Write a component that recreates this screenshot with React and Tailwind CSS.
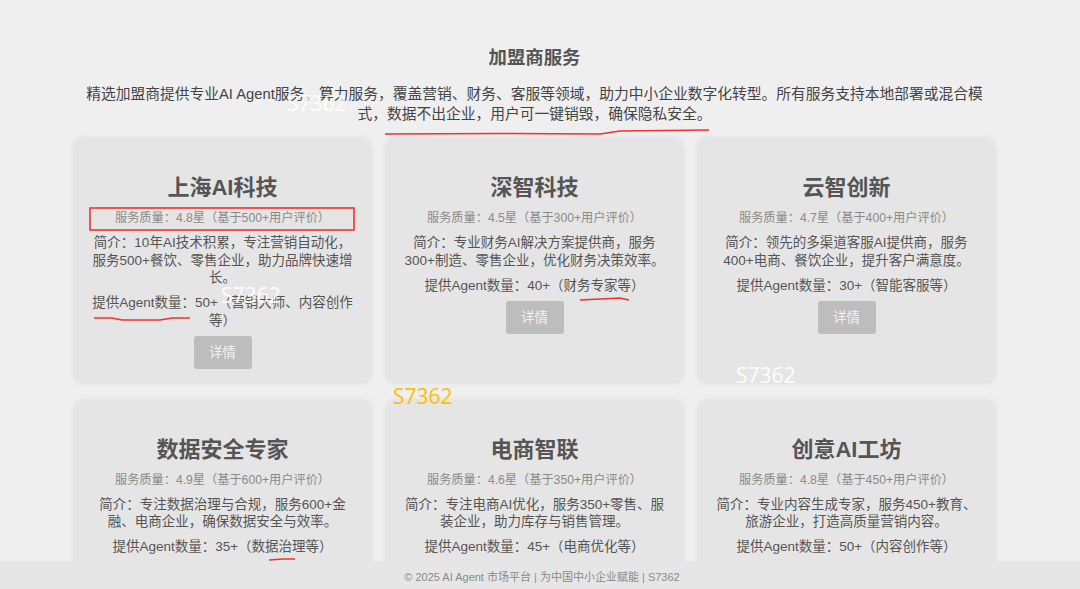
const font = { fontFamily: '"Liberation Sans", "Noto Sans CJK SC", sans-serif' };
const markFont = { fontFamily: '"Open Sans", sans-serif' };

const cards = [
  { name: '上海AI科技', q: '服务质量：4.8星（基于500+用户评价）', d: '简介：10年AI技术积累，专注营销自动化，服务500+餐饮、零售企业，助力品牌快速增长。', a: '提供Agent数量：50+（营销大师、内容创作等）' },
  { name: '深智科技', q: '服务质量：4.5星（基于300+用户评价）', d: '简介：专业财务AI解决方案提供商，服务300+制造、零售企业，优化财务决策效率。', a: '提供Agent数量：40+（财务专家等）' },
  { name: '云智创新', q: '服务质量：4.7星（基于400+用户评价）', d: '简介：领先的多渠道客服AI提供商，服务400+电商、餐饮企业，提升客户满意度。', a: '提供Agent数量：30+（智能客服等）' },
  { name: '数据安全专家', q: '服务质量：4.9星（基于600+用户评价）', d: '简介：专注数据治理与合规，服务600+金融、电商企业，确保数据安全与效率。', a: '提供Agent数量：35+（数据治理等）' },
  { name: '电商智联', q: '服务质量：4.6星（基于350+用户评价）', d: '简介：专注电商AI优化，服务350+零售、服装企业，助力库存与销售管理。', a: '提供Agent数量：45+（电商优化等）' },
  { name: '创意AI工坊', q: '服务质量：4.8星（基于450+用户评价）', d: '简介：专业内容生成专家，服务450+教育、旅游企业，打造高质量营销内容。', a: '提供Agent数量：50+（内容创作等）' },
];

function Card({ c }) {
  return (
    <div className="rounded-[10px] bg-[#e5e5e5] px-[15px] pt-[37px] pb-[15px] text-center shadow-[0_0_6px_rgba(0,0,0,0.04)]">
      <h3 className="text-[22px] leading-[28px] font-bold text-[#555555]">{c.name}</h3>
      <p className="mt-[7px] text-[12.2px] leading-[18px] text-[#8a8a8a]">{c.q}</p>
      <p className="mt-[7px] text-[13.5px] leading-[17.55px] text-[#555555]">{c.d}</p>
      <p className="mt-[7.5px] text-[13.5px] leading-[17.55px] text-[#555555]">{c.a}</p>
      <button className="mt-[7px] h-[33px] w-[58px] rounded-[3px] bg-[#bdbdbd] text-[13.5px] text-[#f2f2f2]">详情</button>
    </div>
  );
}

function Marks() {
  return (
    <svg className="absolute inset-0 pointer-events-none" width="1080" height="589" fill="none">
      <path d="M385 134 L500 133.5 L600 134 L620 131 L709 130" stroke="#f52f2f" strokeWidth="1.4" />
      <rect x="90" y="208" width="264" height="22" stroke="#f52f2f" strokeWidth="1.6" />
      <path d="M94 318 L112 318 L122 320 L160 320 L172 318 L190 318" stroke="#f52f2f" strokeWidth="1.4" />
      <path d="M580 300 L600 299 L620 298 L629 300" stroke="#f52f2f" strokeWidth="1.4" />
      <path d="M269 560 L283 559 L295 559" stroke="#f52f2f" strokeWidth="1.4" />
    </svg>
  );
}

export default function App() {
  return (
    <div style={font} className="relative h-[589px] w-[1080px] overflow-hidden bg-[#efefef]">
      <div className="w-[996px] pl-[73px] pt-[47px]">
        <h2 className="text-center text-[18.4px] leading-[22px] font-bold text-[#555555]">加盟商服务</h2>
        <p className="mx-auto mt-[15px] w-[900px] text-center text-[14.75px] leading-[20px] text-[#444444]">
          精选加盟商提供专业AI Agent服务，算力服务，覆盖营销、财务、客服等领域，助力中小企业数字化转型。所有服务支持本地部署或混合模式，数据不出企业，用户可一键销毁，确保隐私安全。
        </p>
        <div className="mt-[13px] grid grid-cols-3 gap-x-[13px] gap-y-[14.5px]">
          {cards.map((c) => <Card key={c.name} c={c} />)}
        </div>
      </div>
      <footer className="absolute bottom-0 left-0 right-0 h-[28px] bg-[#e6e6e6] pl-[4px] text-center text-[11px] leading-[33px] text-[#8a8a8a]">
        © 2025 AI Agent 市场平台 | 为中国中小企业赋能 | S7362
      </footer>
      <Marks />
      <span style={markFont} className="absolute left-[287px] top-[91px] text-[21px] leading-[24px] text-white/90">S7362</span>
      <span style={markFont} className="absolute left-[221px] top-[283px] text-[21px] leading-[24px] text-white/90">S7362</span>
      <span style={markFont} className="absolute left-[736px] top-[363px] text-[21px] leading-[24px] text-white/90">S7362</span>
      <span style={markFont} className="absolute left-[393px] top-[384px] text-[21px] leading-[24px] text-[#ffc000]">S7362</span>
    </div>
  );
}
